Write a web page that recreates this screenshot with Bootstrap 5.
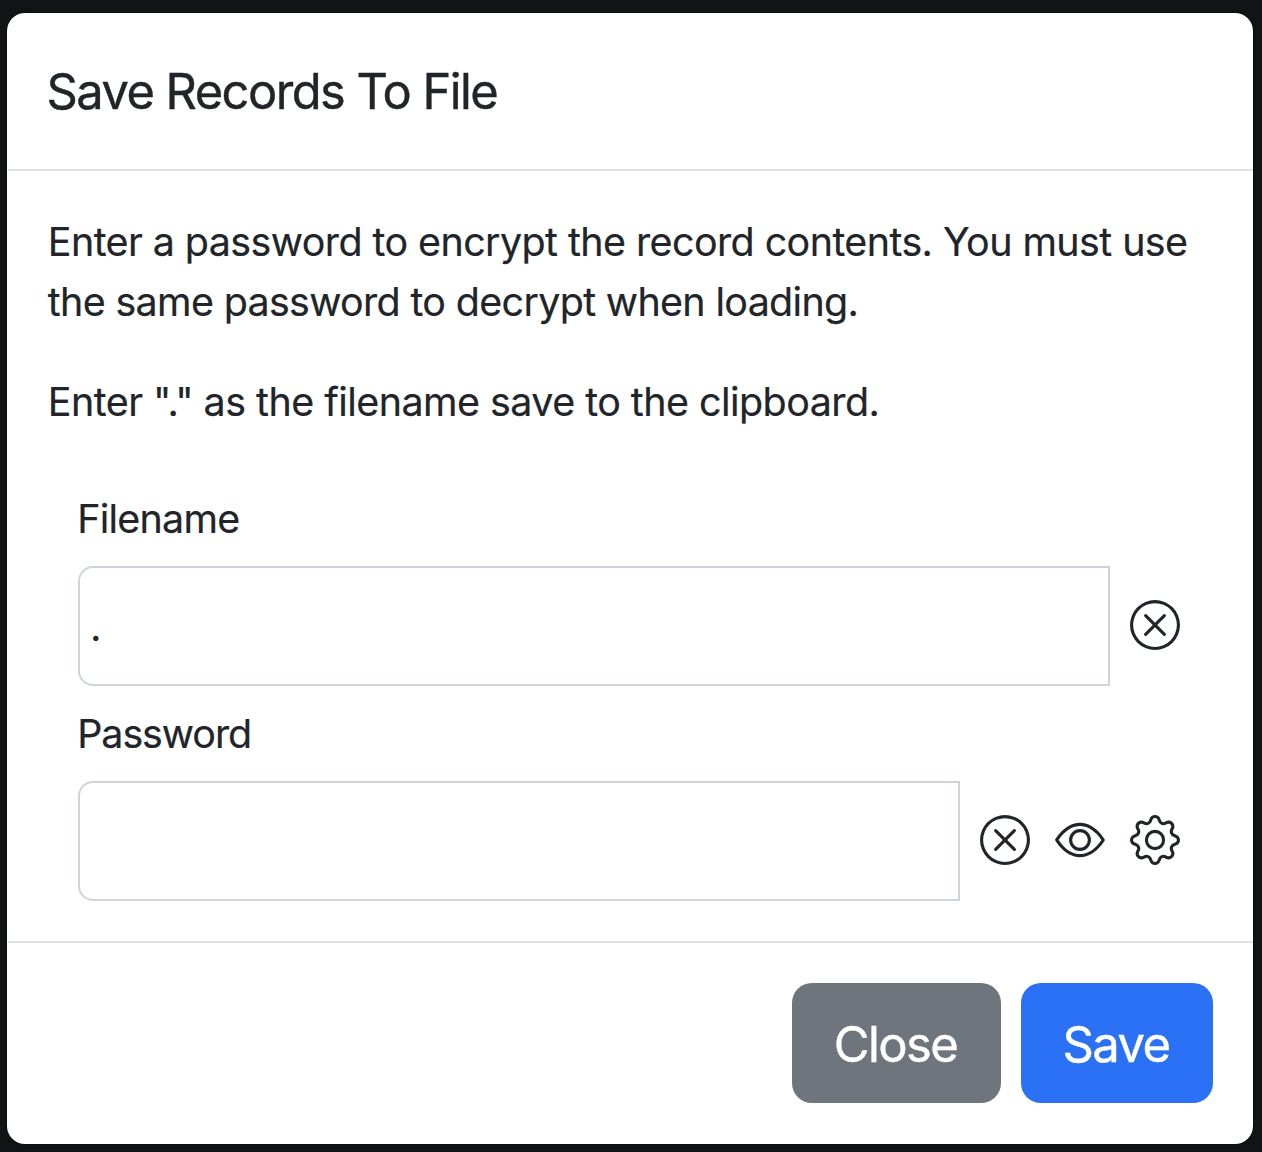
<!DOCTYPE html>
<html lang="en">
<head>
<meta charset="utf-8">
<title>Save Records To File</title>
<link href="https://cdn.jsdelivr.net/npm/bootstrap@5.3.0/dist/css/bootstrap.min.css" rel="stylesheet">
<style>
  body { background: #111315; font-family: Inter, "Liberation Sans", sans-serif; font-size: 39.4px; line-height: 60px; color: #212529; overflow: hidden; }
  .stage { height: 1152px; padding: 13px 9px 8px 7px; }
  .save-dialog { background: #fff; color: #212529; border: 0; border-radius: 18px; height: 1131px; box-shadow: 0 0 2px #000; }
  .save-dialog .modal-header { height: 158px; padding: 0 40px; margin-left: 1px; border-bottom: 2px solid #dee2e6; border-radius: 0; }
  .save-dialog .modal-title { font-size: 48.8px; line-height: 75px; letter-spacing: -1.53px; font-weight: 400; margin-left: -1.5px; -webkit-text-stroke: .4px; }
  .save-dialog .modal-body { padding: 41px 40px 0; }
  .save-dialog .modal-body p { margin-bottom: 40px; padding-left: .8px; white-space: nowrap; -webkit-text-stroke: .2px; }
  .line-a { letter-spacing: -.56px; }
  .line-b { letter-spacing: -.65px; }
  .line-c { letter-spacing: -.52px; }
  .save-dialog .modal-footer { height: 203px; padding: 0 40px 2px; margin-left: 1px; border-top: 2px solid #dee2e6; border-radius: 0; gap: 20px; }
  .save-dialog .modal-footer > * { margin: 0; }
  .fields { padding: 17px 33px 0 31px; }
  .fields label { display: block; height: 60px; margin: 0 0 17px -.8px; -webkit-text-stroke: .2px; }
  .label-file { letter-spacing: -.75px; }
  .label-pass { letter-spacing: -1.05px; }
  .field-row { height: 120px; margin-bottom: 18px; gap: 25px; }
  .field-row .form-control { height: 120px; margin-right: -5px; padding: 0 10px; border: 2px solid #ced4da; border-radius: 15px 0 0 15px; font-size: 40px; color: #212529; box-shadow: none; }
  .icon-btn { width: 50px; height: 50px; margin-bottom: 2px; border: 0; padding: 0; background: none; line-height: 0; color: #212529; }
  .icon-btn svg { width: 50px; height: 50px; fill: currentColor; display: block; }
  .dialog-btn { height: 120px; border: 0; border-radius: 20px; font-size: 49px; padding: 5px 2px 0 0; letter-spacing: -1.6px; -webkit-text-stroke: .4px; }
  .btn-close-dialog { width: 209px; background: #6e757c; }
  .btn-save-dialog { width: 192px; background: #2b71f5; }
</style>
</head>
<body>
<div class="stage">
  <div class="modal-content save-dialog">
    <div class="modal-header d-flex align-items-center">
      <h5 class="modal-title">Save Records To File</h5>
    </div>
    <div class="modal-body">
      <p><span class="line-a">Enter a password to encrypt the record contents. You must use</span><br><span class="line-b">the same password to decrypt when loading.</span></p>
      <p><span class="line-c">Enter "." as the filename save to the clipboard.</span></p>
      <div class="fields">
        <label class="label-file" for="filename">Filename</label>
        <div class="field-row d-flex align-items-center">
          <input id="filename" class="form-control flex-grow-1" type="text" value=".">
          <button class="icon-btn flex-shrink-0" type="button" aria-label="Clear"><svg viewBox="0 0 16 16"><path d="M8 15A7 7 0 1 1 8 1a7 7 0 0 1 0 14zm0 1A8 8 0 1 0 8 0a8 8 0 0 0 0 16z"/><path d="M4.646 4.646a.5.5 0 0 1 .708 0L8 7.293l2.646-2.647a.5.5 0 0 1 .708.708L8.707 8l2.647 2.646a.5.5 0 0 1-.708.708L8 8.707l-2.646 2.647a.5.5 0 0 1-.708-.708L7.293 8 4.646 5.354a.5.5 0 0 1 0-.708z"/></svg></button>
        </div>
        <label class="label-pass" for="password">Password</label>
        <div class="field-row d-flex align-items-center mb-0">
          <input id="password" class="form-control flex-grow-1" type="password">
          <button class="icon-btn flex-shrink-0" type="button" aria-label="Clear"><svg viewBox="0 0 16 16"><path d="M8 15A7 7 0 1 1 8 1a7 7 0 0 1 0 14zm0 1A8 8 0 1 0 8 0a8 8 0 0 0 0 16z"/><path d="M4.646 4.646a.5.5 0 0 1 .708 0L8 7.293l2.646-2.647a.5.5 0 0 1 .708.708L8.707 8l2.647 2.646a.5.5 0 0 1-.708.708L8 8.707l-2.646 2.647a.5.5 0 0 1-.708-.708L7.293 8 4.646 5.354a.5.5 0 0 1 0-.708z"/></svg></button>
          <button class="icon-btn flex-shrink-0" type="button" aria-label="Show"><svg viewBox="0 0 16 16"><path d="M16 8s-3-5.5-8-5.5S0 8 0 8s3 5.5 8 5.5S16 8 16 8zM1.173 8a13.133 13.133 0 0 1 1.66-2.043C4.12 4.668 5.88 3.5 8 3.5c2.12 0 3.879 1.168 5.168 2.457A13.133 13.133 0 0 1 14.828 8c-.058.087-.122.183-.195.288-.335.48-.83 1.12-1.465 1.755C11.879 11.332 10.119 12.5 8 12.5c-2.12 0-3.879-1.168-5.168-2.457A13.134 13.134 0 0 1 1.172 8z"/><path d="M8 5.5a2.5 2.5 0 1 0 0 5 2.5 2.5 0 0 0 0-5zM4.5 8a3.5 3.5 0 1 1 7 0 3.5 3.5 0 0 1-7 0z"/></svg></button>
          <button class="icon-btn flex-shrink-0" type="button" aria-label="Generate"><svg viewBox="0 0 16 16"><path d="M8 4.754a3.246 3.246 0 1 0 0 6.492 3.246 3.246 0 0 0 0-6.492zM5.754 8a2.246 2.246 0 1 1 4.492 0 2.246 2.246 0 0 1-4.492 0z"/><path d="M9.796 1.343c-.527-1.79-3.065-1.79-3.592 0l-.094.319a.873.873 0 0 1-1.255.52l-.292-.16c-1.64-.892-3.433.902-2.54 2.541l.159.292a.873.873 0 0 1-.52 1.255l-.319.094c-1.79.527-1.79 3.065 0 3.592l.319.094a.873.873 0 0 1 .52 1.255l-.16.292c-.892 1.64.901 3.434 2.541 2.54l.292-.159a.873.873 0 0 1 1.255.52l.094.319c.527 1.79 3.065 1.79 3.592 0l.094-.319a.873.873 0 0 1 1.255-.52l.292.16c1.64.893 3.434-.902 2.54-2.541l-.159-.292a.873.873 0 0 1 .52-1.255l.319-.094c1.79-.527 1.79-3.065 0-3.592l-.319-.094a.873.873 0 0 1-.52-1.255l.16-.292c.893-1.64-.902-3.433-2.541-2.54l-.292.159a.873.873 0 0 1-1.255-.52l-.094-.319zm-2.633.283c.246-.835 1.428-.835 1.674 0l.094.319a1.873 1.873 0 0 0 2.693 1.115l.291-.16c.764-.415 1.6.42 1.184 1.185l-.159.292a1.873 1.873 0 0 0 1.116 2.692l.318.094c.835.246.835 1.428 0 1.674l-.319.094a1.873 1.873 0 0 0-1.115 2.693l.16.291c.415.764-.42 1.6-1.185 1.184l-.291-.159a1.873 1.873 0 0 0-2.693 1.116l-.094.318c-.246.835-1.428.835-1.674 0l-.094-.319a1.873 1.873 0 0 0-2.692-1.115l-.292.16c-.764.415-1.6-.42-1.184-1.185l.159-.291A1.873 1.873 0 0 0 1.945 8.93l-.319-.094c-.835-.246-.835-1.428 0-1.674l.319-.094A1.873 1.873 0 0 0 3.06 4.377l-.16-.292c-.415-.764.42-1.6 1.185-1.184l.292.159a1.873 1.873 0 0 0 2.692-1.115l.094-.319z"/></svg></button>
        </div>
      </div>
    </div>
    <div class="modal-footer d-flex flex-nowrap align-items-center justify-content-end">
      <button type="button" class="btn btn-secondary dialog-btn btn-close-dialog">Close</button>
      <button type="button" class="btn btn-primary dialog-btn btn-save-dialog">Save</button>
    </div>
  </div>
</div>
<script src="https://cdn.jsdelivr.net/npm/bootstrap@5.3.0/dist/js/bootstrap.bundle.min.js"></script>
</body>
</html>
